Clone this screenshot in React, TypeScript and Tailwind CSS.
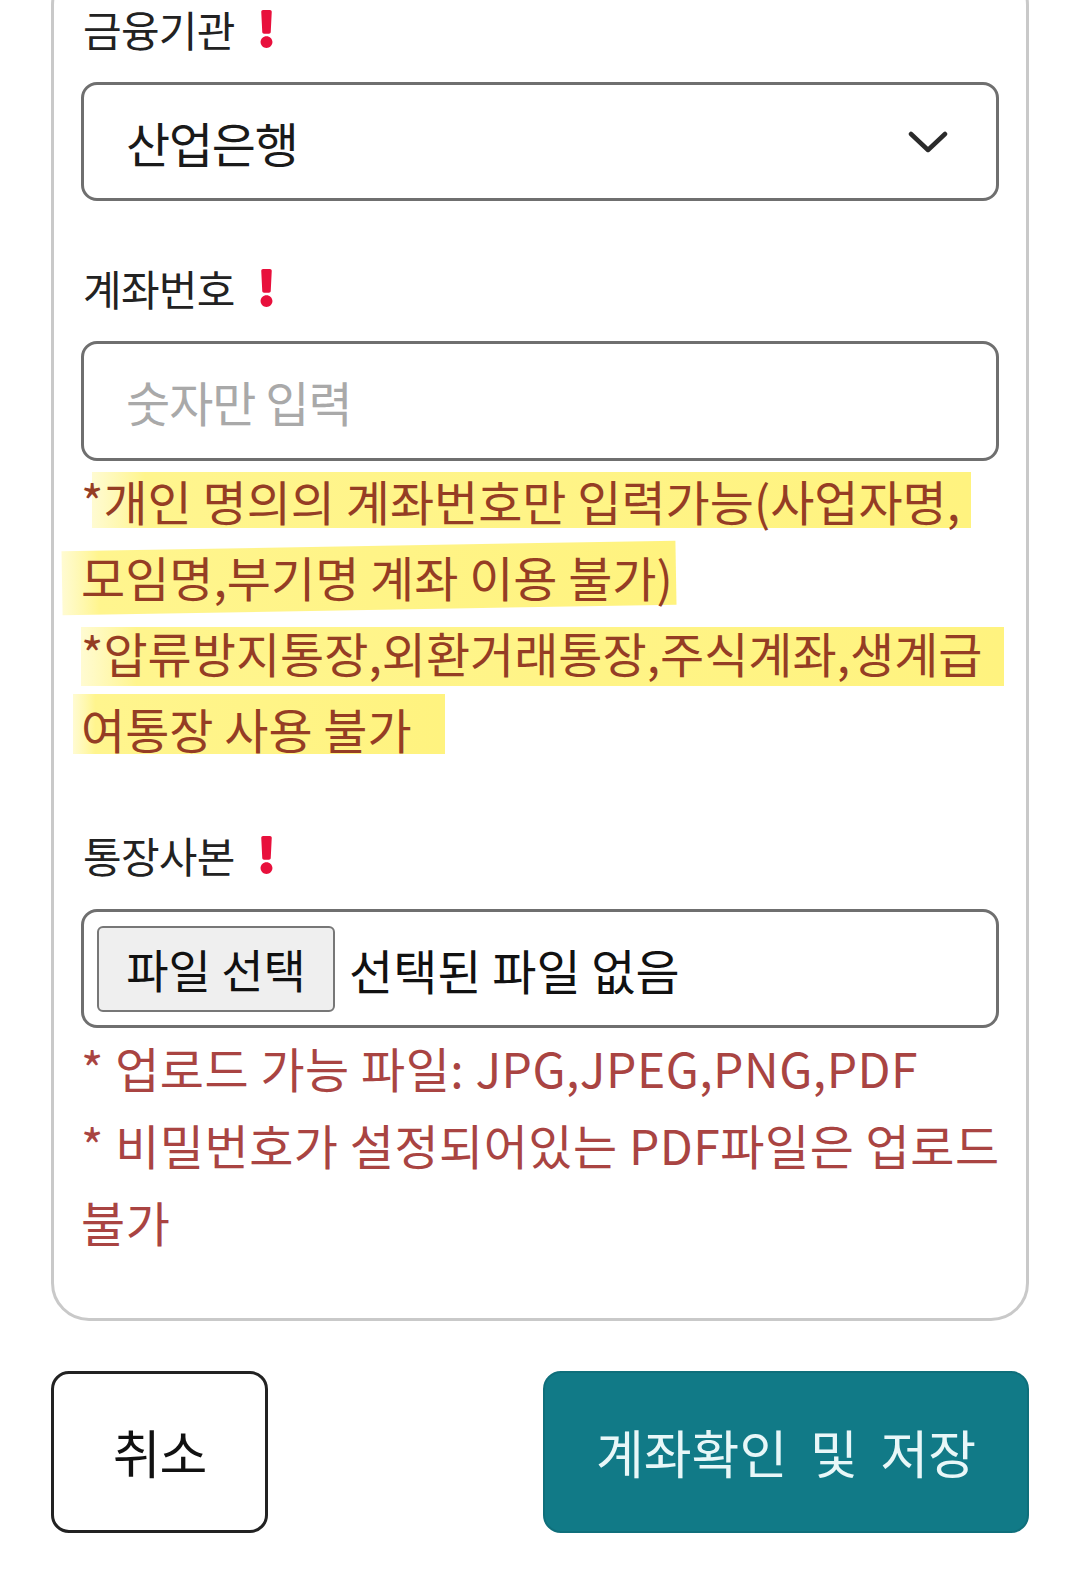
import { FaExclamation } from "react-icons/fa";

const highlightLines = [
  { text: "*개인 명의의 계좌번호만 입력가능(사업자명,", box: "left-[11px] w-[879px] top-[10px] h-[56px]" },
  { text: "모임명,부기명 계좌 이용 불가)", box: "left-[-19px] w-[614px] top-[8px] h-[64px] rotate-[-1deg]" },
  { text: "*압류방지통장,외환거래통장,주식계좌,생계급", box: "left-[0px] w-[923px] top-[13px] h-[59px]" },
  { text: "여통장 사용 불가", box: "left-[-8px] w-[372px] top-[4px] h-[60px]" },
];

const fileNotes = [
  "* 업로드 가능 파일: JPG,JPEG,PNG,PDF",
  "* 비밀번호가 설정되어있는 PDF파일은 업로드",
  "불가",
];

function Label({ children }: { children: React.ReactNode }) {
  return (
    <div className="flex items-center h-[54px] pl-[2px] text-[42px] leading-none tracking-[-0.75px] text-[#222]">
      <span className="leading-none">{children}</span>
      <FaExclamation className="ml-[24px] w-[15px] h-[38px] text-[#e8103c]" />
    </div>
  );
}

export default function App() {
  return (
    <div className="min-h-[1583px] bg-white px-[51px] font-['Noto_Sans_CJK_KR','Noto_Sans',sans-serif] overflow-hidden">
      <div className="-mt-[33px] pt-[32px] pb-[59px] px-[27px] border-[3px] border-[#c9c9c9] rounded-[38px]">
        <Label>금융기관</Label>

        <div className="mt-[26px] h-[119px] border-[3px] border-[#6f6f6f] rounded-[16px] flex items-center justify-between pl-[42px] pr-[48px]">
          <span className="text-[48px] tracking-[-1.25px] text-[#1a1a1a]">산업은행</span>
          <svg width="40" height="22" viewBox="0 0 40 22" fill="none">
            <polyline points="3,3 20,19 37,3" stroke="#2b2b2b" strokeWidth="4.5" strokeLinecap="round" strokeLinejoin="round" />
          </svg>
        </div>

        <div className="mt-[60px]">
          <Label>계좌번호</Label>
        </div>

        <div className="mt-[26px] h-[120px] border-[3px] border-[#6f6f6f] rounded-[16px] flex items-center pl-[42px]">
          <span className="text-[48px] tracking-[-1px] text-[#a9a9a9]">숫자만 입력</span>
        </div>

        <div className="mt-[1px] flex flex-col">
          {highlightLines.map(({ text, box }) => (
            <div key={text} className="relative h-[76px] flex items-center whitespace-nowrap">
              <div
                className={`absolute ${box} bg-linear-to-r from-[#fffbd2] via-[#fff58e] via-[6%] to-[#fff37f]`}
              />
              <span className="relative text-[48px] text-[#953d24]">{text}</span>
            </div>
          ))}
        </div>

        <div className="mt-[62px]">
          <Label>통장사본</Label>
        </div>

        <div className="mt-[27px] h-[119px] border-[3px] border-[#6f6f6f] rounded-[16px] flex items-center pl-[13px] gap-[14px]">
          <div className="h-[86px] w-[238px] bg-[#efefef] border-[2px] border-[#777] rounded-[6px] flex items-center justify-center text-[46px] text-[#111]">
            파일 선택
          </div>
          <span className="text-[48px] text-[#111]">선택된 파일 없음</span>
        </div>

        <div className="flex flex-col">
          {fileNotes.map((note) => (
            <div key={note} className="h-[77px] flex items-center whitespace-nowrap text-[48px] tracking-[0.5px] text-[#a94442]">
              {note}
            </div>
          ))}
        </div>
      </div>

      <div className="mt-[50px] flex justify-between">
        <button className="w-[217px] h-[162px] border-[3px] border-[#222] rounded-[18px] bg-white text-[52px] tracking-[-1px] text-[#111]">
          취소
        </button>
        <button className="w-[486px] h-[162px] rounded-[18px] bg-[#117a87] text-[52px] [word-spacing:11px] text-[#e8f7f8] border-[2px] border-[#0f6f7b]">
          계좌확인 및 저장
        </button>
      </div>
    </div>
  );
}
